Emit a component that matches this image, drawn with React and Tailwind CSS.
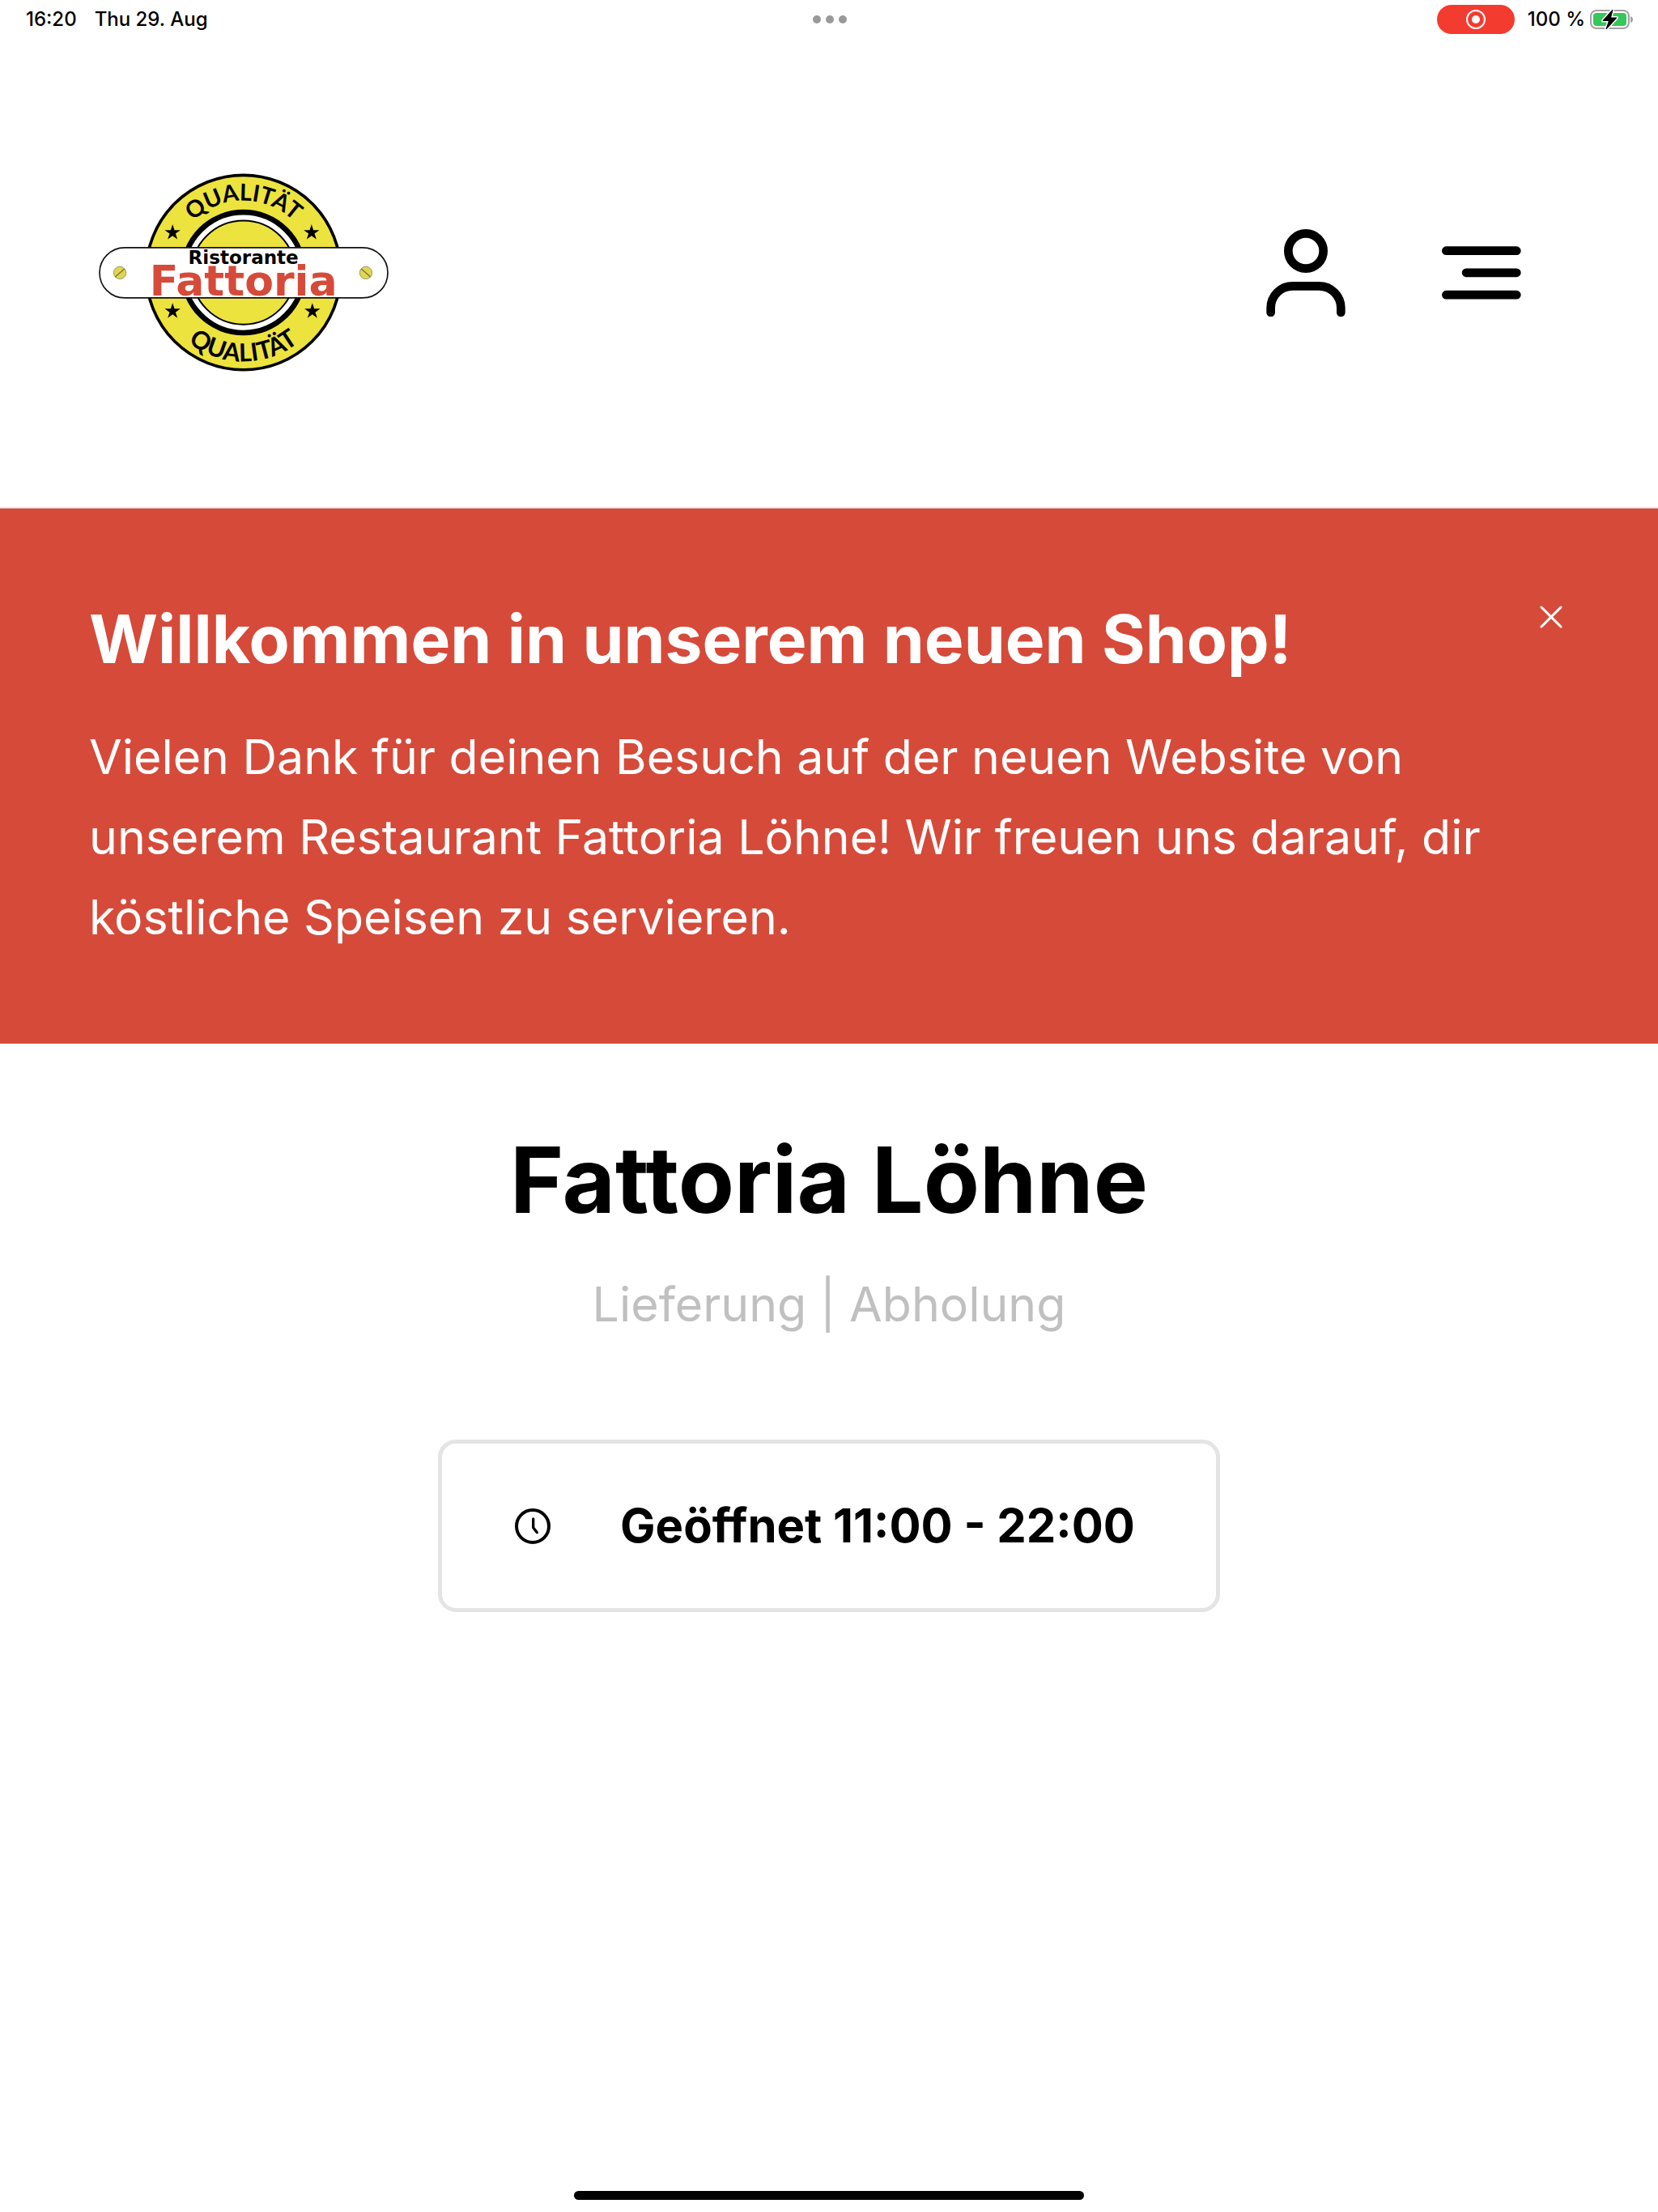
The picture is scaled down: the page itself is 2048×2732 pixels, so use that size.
import { useState } from "react";

const STAR = "M0 -30 L7 -9 L29 -9 L11 4 L18 25 L0 12 L-18 25 L-11 4 L-29 -9 L-7 -9 Z";

function Logo() {
  return (
    <svg viewBox="36 42 1072 736" className="w-[358px] h-auto" role="img" aria-label="Ristorante Fattoria">
      <defs>
        <path id="arc-top" d="M305 409 A266 266 0 0 1 837 409" />
        <path id="arc-bottom" d="M242 409 A329 329 0 0 0 900 409" />
      </defs>
      <circle cx="571" cy="409" r="360" fill="#ede33f" stroke="#000" strokeWidth="11" />
      <circle cx="571" cy="409" r="223" fill="#fff" stroke="#000" strokeWidth="20" />
      <circle cx="571" cy="409" r="192" fill="#ede33f" stroke="#000" strokeWidth="6" />
      <g fontFamily="Lato, sans-serif" fontWeight="700" textAnchor="middle">
        <text fontSize="86">
          <textPath href="#arc-top" startOffset="50%">QUALITÄT</textPath>
        </text>
        <text fontSize="92">
          <textPath href="#arc-bottom" startOffset="50%">QUALITÄT</textPath>
        </text>
      </g>
      <path d={STAR} transform="translate(309 261)" />
      <path d={STAR} transform="translate(823 261)" />
      <path d={STAR} transform="translate(309 552)" />
      <path d={STAR} transform="translate(826 552)" />
      <rect x="39" y="317" width="1066" height="186" rx="93" fill="#fff" stroke="#111" strokeWidth="5" />
      <g fill="#dfd653" stroke="#77733a" strokeWidth="2">
        <circle cx="114" cy="410" r="23" />
        <circle cx="1024" cy="410" r="23" />
        <path d="M97 425 L131 395 M1007 395 L1041 425" strokeWidth="4" />
      </g>
      <g fontFamily="'DejaVu Sans', sans-serif" fontWeight="700" textAnchor="middle">
        <text x="571" y="377" fontSize="69">
          Ristorante
        </text>
        <text x="571" y="495" fontSize="156" fill="#d64a3a">
          Fattoria
        </text>
      </g>
    </svg>
  );
}

function StatusBar() {
  return (
    <div className="grid grid-cols-3 items-center h-12 pl-8 pr-[30px] text-2xl font-medium">
      <div className="flex gap-[22px]">
        <span>16:20</span>
        <span>Thu 29. Aug</span>
      </div>
      <div className="flex justify-center gap-1.5">
        <span className="size-2.5 rounded-full bg-[#999]" />
        <span className="size-2.5 rounded-full bg-[#999]" />
        <span className="size-2.5 rounded-full bg-[#999]" />
      </div>
      <div className="flex items-center justify-end">
        <span className="flex items-center justify-center w-24 h-9 rounded-full bg-[#f43b2f] mr-4">
          <svg viewBox="0 0 24 24" className="size-6" fill="none" stroke="#fff" strokeWidth="2">
            <circle cx="12" cy="12" r="11" />
            <circle cx="12" cy="12" r="5" fill="#fff" stroke="none" />
          </svg>
        </span>
        <span className="mr-1.5">100 %</span>
        <svg viewBox="0 0 54 26" className="w-[54px] h-[26px]">
          <rect x="1" y="2" width="47" height="22" rx="7" fill="none" stroke="#a3a3a3" strokeWidth="2" />
          <rect x="4" y="5" width="41" height="16" rx="4" fill="#34c759" />
          <path d="M50 9 Q53 10 53 13 Q53 16 50 17 Z" fill="#a3a3a3" />
          <path
            d="M28 1 L16 14.5 H23.5 L20 25 L33 11 H25.5 Z"
            fill="#000"
            stroke="#fff"
            strokeWidth="4"
            strokeLinejoin="round"
            paintOrder="stroke"
          />
          <path d="M28 1 L16 14.5 H23.5 L20 25 L33 11 H25.5 Z" stroke="#000" strokeLinejoin="round" />
        </svg>
      </div>
    </div>
  );
}

function Header() {
  return (
    <header className="flex items-center justify-between h-[580px] pl-[122px] pr-[169px] border-b-2 border-[#e5e5e5]">
      <a href="#home">
        <Logo />
      </a>
      <nav className="flex items-center gap-[119px]">
        <button type="button" aria-label="Konto">
          <svg
            viewBox="72 68 294 326"
            className="w-[98px] h-auto"
            fill="none"
            stroke="currentColor"
            strokeWidth="32"
            strokeLinecap="round"
          >
            <circle cx="219" cy="149" r="65" />
            <path d="M89 377 V360 A81 81 0 0 1 170 279 H268 A81 81 0 0 1 349 360 V377" />
          </svg>
        </button>
        <button type="button" aria-label="Menü">
          <svg
            viewBox="724 132 293 197"
            className="w-[98px] h-auto"
            stroke="currentColor"
            strokeWidth="32"
            strokeLinecap="round"
          >
            <path d="M740 149 H1000 M814 230 H1000 M740 312 H1000" />
          </svg>
        </button>
      </nav>
    </header>
  );
}

function Banner({ onClose }) {
  return (
    <section className="flex items-start justify-between h-[661px] pl-[110px] pr-[118px] pt-[106px] bg-[#d64a3a] text-white">
      <div className="max-w-[1740px]">
        <h2 className="text-[82px] leading-[112px] font-bold">Willkommen in unserem neuen Shop!</h2>
        <p className="mt-[39px] text-[59px] leading-[99px]">
          Vielen Dank für deinen Besuch auf der neuen Website von unserem Restaurant Fattoria Löhne! Wir freuen uns
          darauf, dir köstliche Speisen zu servieren.
        </p>
      </div>
      <button type="button" aria-label="Schließen" className="mt-3.5" onClick={onClose}>
        <svg
          viewBox="0 0 28 28"
          className="size-7"
          fill="none"
          stroke="currentColor"
          strokeWidth="3"
          strokeLinecap="round"
        >
          <path d="M2 2 L26 26 M26 2 L2 26" />
        </svg>
      </button>
    </section>
  );
}

export default function App() {
  const [showBanner, setShowBanner] = useState(true);

  return (
    <div className="flex flex-col min-h-screen bg-white text-black font-['Inter',sans-serif]">
      <StatusBar />
      <Header />
      {showBanner && <Banner onClose={() => setShowBanner(false)} />}

      <main className="flex flex-col items-center pt-24">
        <h1 className="text-[113px] leading-[144px] font-bold">Fattoria Löhne</h1>
        <p className="mt-8 text-[59px] leading-[99px] text-[#c0c0c0]">Lieferung | Abholung</p>
        <button
          type="button"
          className="flex items-center gap-[86px] mt-[118px] h-[213px] pl-[90px] pr-[100px] border-5 border-[#e4e4e4] rounded-[22px] text-[58px] font-bold"
        >
          <svg
            viewBox="315 279 132 132"
            className="size-11"
            fill="none"
            stroke="currentColor"
            strokeLinecap="round"
            strokeLinejoin="round"
          >
            <circle cx="381" cy="345" r="60" strokeWidth="12" />
            <path d="M383 318 V350 L397 368" strokeWidth="10" />
          </svg>
          <span>Geöffnet 11:00 - 22:00</span>
        </button>
      </main>

      <div className="mt-auto mx-auto mb-[15px] w-[630px] max-w-full h-[11px] rounded-full bg-black" />
    </div>
  );
}
